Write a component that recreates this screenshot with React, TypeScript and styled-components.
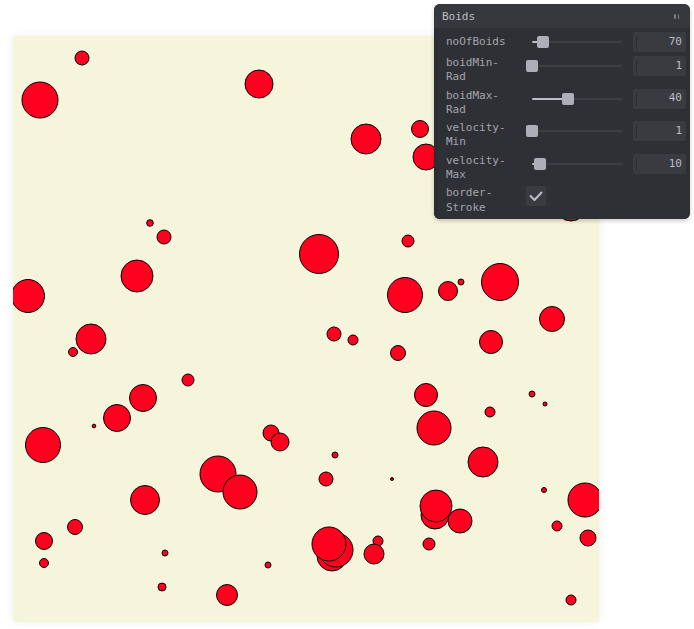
import React from "react";
import styled, { createGlobalStyle } from "styled-components";

const GlobalStyle = createGlobalStyle`
  html, body { margin: 0; padding: 0; background: #ffffff; }
  body { width: 694px; height: 629px; overflow: hidden; position: relative; }
`;

const Page = styled.div`
  padding: 36px 0 0 13px;
  width: 694px;
  height: 629px;
  box-sizing: border-box;
`;

const Stage = styled.div`
  width: 586px;
  height: 586px;
  background: #f5f5dc;
  border-radius: 4px;
  box-shadow: 0 0 10px rgba(0, 0, 0, 0.07);
  overflow: hidden;
  svg { display: block; }
`;

const Pane = styled.div`
  position: absolute;
  top: 4px;
  right: 4px;
  width: 256px;
  background: #28292e;
  border-radius: 6px;
  box-shadow: 0 2px 4px rgba(0, 0, 0, 0.2);
  font-family: "DejaVu Sans Mono", "Liberation Mono", monospace;
  font-size: 11px;
  overflow: hidden;
`;

const TitleBar = styled.div`
  height: 24px;
  display: flex;
  align-items: center;
  justify-content: space-between;
  padding: 0 8px;
  background: #37383d;
  color: #bbbcc4;
`;

const Grip = styled.span`
  display: flex;
  gap: 2px;
  margin-right: 3px;
  span {
    width: 1.5px;
    height: 5px;
    background: #7b7c84;
    border-radius: 1px;
  }
`;

const Content = styled.div`
  display: flex;
  flex-direction: column;
  gap: 4px;
  padding: 4px 4px 4px 4px;
  border-left: 4px solid #2c2d32;
  background: #2f3035;
`;

const Row = styled.div`
  display: flex;
  align-items: center;
  line-height: 1.3;
`;

const Label = styled.div`
  flex: 1;
  min-width: 0;
  padding: 0 16px 0 4px;
  color: #a3a4ab;
`;

const Value = styled.div`
  align-self: flex-start;
  flex: 0 0 160px;
  width: 160px;
  display: flex;
`;

const Slider = styled.div`
  flex: 2;
  height: 20px;
  padding: 0 6px;
  display: flex;
  align-items: center;
`;

const Track = styled.div`
  position: relative;
  flex: 1;
  height: 2px;
  background: #3d3e43;
  border-radius: 1px;
`;

const Fill = styled.div`
  position: absolute;
  left: 0;
  top: 0;
  bottom: 0;
  background: #bbbcc4;
  border-radius: 1px;
`;

const Knob = styled.div`
  position: absolute;
  top: -5px;
  width: 12px;
  height: 12px;
  margin-left: -6px;
  border-radius: 2px;
  background: #adafb8;
`;

const NumberBox = styled.div`
  flex: 1;
  margin-left: 4px;
  height: 20px;
  position: relative;
  border-radius: 2px;
  background: #3a3b40;
  color: #bbbcc4;
  display: flex;
  align-items: center;
  justify-content: flex-end;
  padding: 0 4px;
  &::before {
    content: "";
    position: absolute;
    left: 3px;
    top: 3px;
    bottom: 3px;
    width: 1px;
    background: #2c2d32;
  }
`;

const CheckBox = styled.div`
  width: 20px;
  height: 20px;
  border-radius: 2px;
  background: #3a3b40;
  display: flex;
  align-items: center;
  justify-content: center;
`;

type Circle = [number, number, number];

const boids: Circle[] = [
  [82, 58, 7], [40, 100, 18], [259, 84, 14], [366, 139, 15], [420, 129, 8.5],
  [426, 157, 13], [571, 205, 16], [150, 223, 3.3], [164, 237, 7], [319, 254, 19.5],
  [408, 241, 6], [137, 276, 16], [28, 296, 16.5], [405, 295, 17.5], [448, 291, 9.5],
  [461, 282, 3], [500, 282, 18.5], [552, 319, 12.5], [91, 339, 15], [73, 352, 4.5],
  [334, 334, 7], [353, 340, 5], [398, 353, 7.5], [491, 342, 11.5], [188, 380, 6],
  [143, 398, 13.5], [117, 418, 13.5], [94, 426, 1.8], [426, 395, 11.5], [532, 394, 3],
  [545, 404, 2], [490, 412, 5], [434, 428, 17], [43, 445, 17.5], [271, 433, 8],
  [280, 442, 9], [335, 455, 3], [218, 474, 18], [240, 492, 17], [326, 479, 7],
  [392, 479, 1.5], [483, 462, 15], [145, 500, 14.5], [544, 490, 2.5], [585, 500, 17],
  [435, 515, 14], [436, 506, 16], [460, 521, 12], [557, 526, 5], [75, 527, 7.5],
  [588, 538, 8], [44, 541, 8.5], [332, 556, 15], [336, 550, 17], [329, 544, 17],
  [378, 541, 5], [374, 554, 10], [429, 544, 6], [165, 553, 3], [44, 563, 4.5],
  [268, 565, 3], [162, 587, 4], [227, 595, 10.5], [571, 600, 5],
];

type SliderRow = { label: string; value: number; frac: number };

const sliders: SliderRow[] = [
  { label: "noOfBoids", value: 70, frac: 0.12 },
  { label: "boidMin-Rad", value: 1, frac: 0 },
  { label: "boidMax-Rad", value: 40, frac: 0.395 },
  { label: "velocity-Min", value: 1, frac: 0 },
  { label: "velocity-Max", value: 10, frac: 0.087 },
];

function SliderControl({ label, value, frac }: SliderRow) {
  const pct = `${frac * 100}%`;
  return (
    <Row>
      <Label>{label}</Label>
      <Value>
        <Slider>
          <Track>
            <Fill style={{ width: pct }} />
            <Knob style={{ left: pct }} />
          </Track>
        </Slider>
        <NumberBox>{value}</NumberBox>
      </Value>
    </Row>
  );
}

export default function App() {
  return (
    <>
      <GlobalStyle />
      <Page>
        <Stage>
          <svg width="586" height="586" viewBox="13 36 586 586">
            {boids.map(([cx, cy, r], i) => (
              <circle key={i} cx={cx} cy={cy} r={r} fill="#ff001e" stroke="#000" strokeWidth={1} />
            ))}
          </svg>
        </Stage>
      </Page>
      <Pane>
        <TitleBar>
          <span>Boids</span>
          <Grip>
            <span />
            <span />
          </Grip>
        </TitleBar>
        <Content>
          {sliders.map((s) => (
            <SliderControl key={s.label} {...s} />
          ))}
          <Row>
            <Label>border-Stroke</Label>
            <Value>
              <CheckBox>
                <svg width="20" height="20" viewBox="0 0 20 20">
                  <polyline points="4.5,10 8.5,14 15.5,6.5" fill="none" stroke="#bbbcc4" strokeWidth="2" strokeLinecap="round" strokeLinejoin="round" />
                </svg>
              </CheckBox>
            </Value>
          </Row>
        </Content>
      </Pane>
    </>
  );
}
